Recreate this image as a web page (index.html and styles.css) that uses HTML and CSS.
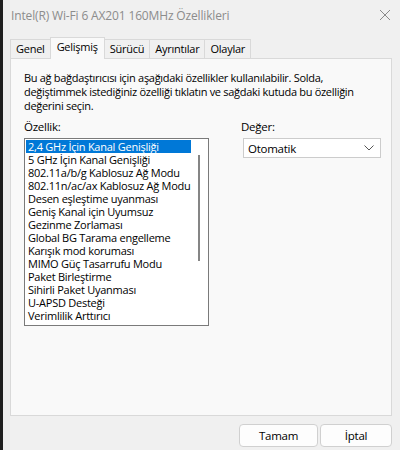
FILE: index.html
```html
<!DOCTYPE html>
<html lang="tr">
<head>
    <meta charset="UTF-8">
    <title>Özellikler</title>
    <link rel="stylesheet" href="styles.css">
</head>

<body>
<div class="window">

    <!-- Title bar -->
    <div class="titlebar">
        <span class="title">Intel(R) Wi-Fi 6 AX201 160MHz Özellikleri</span>
        <svg class="close" width="12" height="12" viewBox="0 0 12 12">
            <path d="M1 1 L11 11 M11 1 L1 11" stroke="#8a8a8a" stroke-width="1" fill="none"/>
        </svg>
    </div>

    <!-- Tabs -->
    <div class="tabs">
        <div class="tab">Genel</div>
        <div class="tab active">Gelişmiş</div>
        <div class="tab">Sürücü</div>
        <div class="tab">Ayrıntılar</div>
        <div class="tab">Olaylar</div>
    </div>

    <div class="panel">
        <p class="intro">Bu ağ bağdaştırıcısı için aşağıdaki özellikler kullanılabilir. Solda,<br>değiştimmek istediğiniz özelliği tıklatın ve sağdaki kutuda bu özelliğin<br>değerini seçin.</p>

        <div class="fields">
            <div class="col-left">
                <label class="caption">Özellik:</label>
                <div class="listbox">
                    <ul class="items">
                        <li class="selected">2,4 GHz İçin Kanal Genişliği</li>
                        <li>5 GHz İçin Kanal Genişliği</li>
                        <li>802.11a/b/g Kablosuz Ağ Modu</li>
                        <li>802.11n/ac/ax Kablosuz Ağ Modu</li>
                        <li>Desen eşleştime uyanması</li>
                        <li>Geniş Kanal için Uyumsuz</li>
                        <li>Gezinme Zorlaması</li>
                        <li>Global BG Tarama engelleme</li>
                        <li>Karışık mod koruması</li>
                        <li>MIMO Güç Tasarrufu Modu</li>
                        <li>Paket Birleştirme</li>
                        <li>Sihirli Paket Uyanması</li>
                        <li>U-APSD Desteği</li>
                        <li>Verimlilik Arttırıcı</li>
                    </ul>
                    <div class="scrollbar"><div class="thumb"></div></div>
                </div>
            </div>

            <div class="col-right">
                <label class="caption">Değer:</label>
                <div class="select">
                    <span>Otomatik</span>
                    <svg width="10" height="6" viewBox="0 0 10 6">
                        <path d="M0.5 0.5 L5 5 L9.5 0.5" stroke="#555" stroke-width="1" fill="none"/>
                    </svg>
                </div>
            </div>
        </div>
    </div>

    <!-- Dialog buttons -->
    <div class="buttons">
        <button type="button">Tamam</button>
        <button type="button">İptal</button>
    </div>

</div>
</body>
</html>
```

FILE: styles.css
```css
/* Page styling */
body {
    margin: 0;
    font-family: 'Open Sans', 'Noto Sans', sans-serif;
    font-size: 11.5px;
    letter-spacing: -0.25px;
    color: #000000;
    background-color: #202020; /* Desktop edge */
}

/* Dialog window */
.window {
    margin-left: 3px;
    height: 450px;
    background-color: #F0F0F0;
    display: flex;
    flex-direction: column;
}

/* Title bar */
.titlebar {
    height: 30px;
    padding: 0 9px 0 8px;
    display: flex;
    align-items: center;
    justify-content: space-between;
}

.title {
    color: #8C8C8C;
    font-size: 12px;
    letter-spacing: -0.15px;
}

/* Tabs row */
.tabs {
    display: flex;
    align-items: flex-end;
    margin: 7px 0 0 7px;
    height: 21px;
    font-size: 11px;
}

.tab {
    height: 18px;
    line-height: 18px;
    padding: 0 5px;
    border: 1px solid #D9D9D9;
    border-bottom: none;
    background-color: #F0F0F0;
    margin-right: -1px;
}

.tab.active {
    height: 21px;
    line-height: 17px;
    background-color: #F9F9F9;
    position: relative;
    z-index: 1;
    margin-bottom: -1px;
    padding: 0 6px;
}

/* Tab content */
.panel {
    margin: 0 8px 0 7px;
    height: 358px;
    border: 1px solid #D9D9D9;
    background-color: #F9F9F9;
    padding: 12px 10px 10px 13px;
    box-sizing: border-box;
}

.intro {
    margin: 0;
    line-height: 14px;
    font-size: 11px;
    letter-spacing: -0.3px;
    white-space: nowrap;
}

.fields {
    display: flex;
    justify-content: space-between;
    margin-top: 7px;
}

.caption {
    display: block;
    line-height: 14px;
    margin-bottom: 4px;
}

/* Property list */
.listbox {
    width: 185px;
    height: 188px;
    border: 1px solid #7A7A7A;
    background-color: #FFFFFF;
    box-sizing: border-box;
    display: flex;
}

.items {
    list-style: none;
    margin: 0;
    padding: 1px 0 0 1px;
    flex: 1;
    font-size: 11px;
}

.items li {
    height: 13px;
    line-height: 13px;
    padding-left: 2px;
    white-space: nowrap;
}

.items li.selected {
    background-color: #0078D7;
    color: #FFFFFF;
    margin-right: 7px;
}

.scrollbar {
    width: 10px;
    padding-top: 16px;
}

.thumb {
    width: 2px;
    height: 106px;
    background-color: #858585;
}

/* Value dropdown */
.col-right {
    width: 140px;
}

.select {
    height: 20px;
    margin-left: 2px;
    border: 1px solid #CCCCCC;
    background-color: #FFFFFF;
    box-sizing: border-box;
    display: flex;
    align-items: center;
    justify-content: space-between;
    padding: 0 6px 0 4px;
}

/* Bottom buttons */
.buttons {
    display: flex;
    justify-content: flex-end;
    gap: 2px;
    margin: 8px 8px 0 0;
}

.buttons button {
    width: 79px;
    height: 23px;
    font-family: inherit;
    font-size: 11.5px;
    letter-spacing: -0.25px;
    background-color: #FDFDFD;
    border: 1px solid #D0D0D0;
    border-radius: 4px;
    color: #000000;
}

.buttons button + button {
    width: 72px;
}
```
